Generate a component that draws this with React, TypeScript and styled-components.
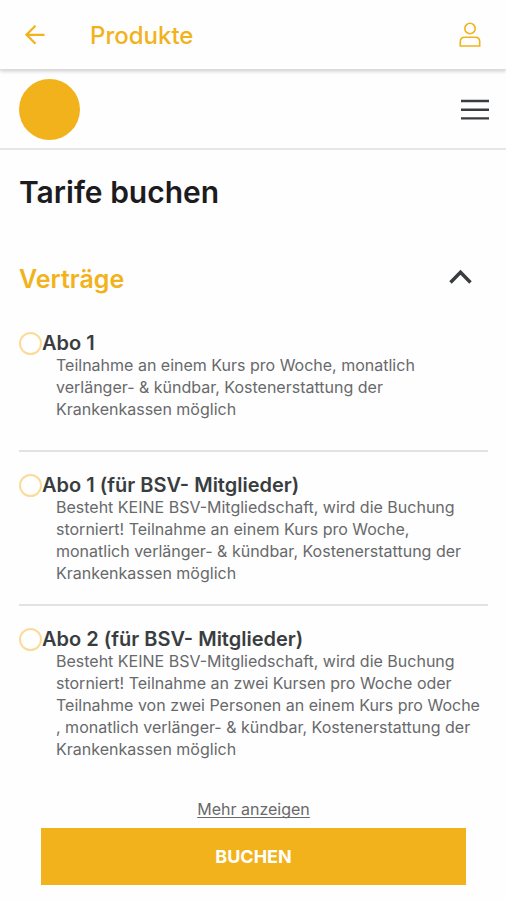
import React, { useState } from "react";
import styled, { createGlobalStyle } from "styled-components";

const accent = "#f2b21b";

const GlobalStyle = createGlobalStyle`
  *, *::before, *::after { box-sizing: border-box; }
  body {
    margin: 0;
    background: #fefefe;
    color: #3a3d40;
    font-family: Inter, "Liberation Sans", sans-serif;
  }
  button { font: inherit; color: inherit; border: 0; padding: 0; background: none; cursor: pointer; }
`;

const Page = styled.div`
  display: flex;
  flex-direction: column;
  min-height: 100vh;
`;

const AppBar = styled.header`
  display: flex;
  align-items: center;
  gap: 40px;
  height: 70px;
  padding: 3px 20px 0;
  color: ${accent};
  border-bottom: 1px solid #dcdcdc;
  box-shadow: 0 1px 4px rgba(0, 0, 0, 0.22);
`;

const AppTitle = styled.span`
  flex: 1;
  font-size: 24px;
  font-weight: 500;
  line-height: 32px;
`;

const IconButton = styled.button`
  display: flex;
  align-items: center;
  justify-content: center;
  flex: none;
`;

const SiteBar = styled.nav`
  display: flex;
  align-items: center;
  justify-content: space-between;
  height: 80px;
  padding: 0 16px 0 19px;
  border-bottom: 2px solid #e6e6e6;
`;

const Logo = styled.a`
  width: 61px;
  height: 61px;
  border-radius: 50%;
  background: ${accent};
`;

const Main = styled.main`
  display: flex;
  flex-direction: column;
  flex: 1;
  padding: 24px 18px 15px 19px;
`;

const Heading = styled.h1`
  margin: 0;
  font-size: 30px;
  font-weight: 600;
  line-height: 36px;
  color: #1c1c1e;
`;

const SectionHeader = styled.div`
  display: flex;
  align-items: center;
  justify-content: space-between;
  margin-top: 52px;
  padding-right: 16px;
`;

const SectionTitle = styled.h2`
  margin: 0;
  font-size: 25px;
  font-weight: 600;
  line-height: 34px;
  color: ${accent};
`;

const Tariffs = styled.div`
  display: flex;
  flex-direction: column;
  margin-top: 14px;
`;

const Tariff = styled.label`
  display: grid;
  grid-template-columns: 23px 1fr;
  grid-template-rows: 22px;
  align-content: start;
  min-height: 140px;
  padding: 22px 0 20px;
  cursor: pointer;

  & + & { border-top: 2px solid #e2e2e2; }
`;

const Radio = styled.input`
  appearance: none;
  align-self: center;
  width: 23px;
  height: 23px;
  margin: 0;
  border: 2px solid #fadb9a;
  border-radius: 50%;
  background: #ffffff;

  &:checked { background: ${accent}; box-shadow: inset 0 0 0 4px #ffffff; }
`;

const TariffName = styled.span`
  font-size: 20px;
  font-weight: 600;
  line-height: 22px;
`;

const Description = styled.span`
  grid-column: 1 / -1;
  padding: 0 4px 0 37px;
  font-size: 16px;
  line-height: 22px;
  color: #68696b;
`;

const Actions = styled.div`
  display: flex;
  flex-direction: column;
  align-items: center;
  gap: 8px;
  margin-top: auto;
  padding: 0 22px;
`;

const MoreButton = styled.button`
  font-size: 16px;
  line-height: 22px;
  color: #68696b;
  text-decoration: underline;
  text-underline-offset: 2px;
  text-decoration-skip-ink: none;
`;

const BookButton = styled.button`
  width: 100%;
  height: 57px;
  background: ${accent};
  color: #ffffff;
  font-size: 18px;
  font-weight: 700;
`;

const tariffs = [
  {
    id: "abo-1",
    name: "Abo 1",
    text: "Teilnahme an einem Kurs pro Woche, monatlich verlänger- & kündbar, Kostenerstattung der Krankenkassen möglich",
  },
  {
    id: "abo-1-bsv",
    name: "Abo 1 (für BSV- Mitglieder)",
    text: "Besteht KEINE BSV-Mitgliedschaft, wird die Buchung storniert! Teilnahme an einem Kurs pro Woche, monatlich verlänger- & kündbar, Kostenerstattung der Krankenkassen möglich",
  },
  {
    id: "abo-2-bsv",
    name: "Abo 2 (für BSV- Mitglieder)",
    text: "Besteht KEINE BSV-Mitgliedschaft, wird die Buchung storniert! Teilnahme an zwei Kursen pro Woche oder Teilnahme von zwei Personen an einem Kurs pro Woche , monatlich verlänger- & kündbar, Kostenerstattung der Krankenkassen möglich",
  },
];

export default function App() {
  const [selected, setSelected] = useState("");
  const [open, setOpen] = useState(true);

  return (
    <Page>
      <GlobalStyle />
      <AppBar>
        <IconButton aria-label="Zurück">
          <svg width="30" height="30" viewBox="0 0 30 30" fill="none" stroke="currentColor" strokeWidth="2.200">
            <path d="M24.500 13.800H7M15.500 4.800L6.500 13.800L15.500 22.800" />
          </svg>
        </IconButton>
        <AppTitle>Produkte</AppTitle>
        <IconButton aria-label="Profil">
          <svg width="32" height="32" viewBox="0 0 32 32" fill="none" stroke="currentColor" strokeWidth="1.600">
            <circle cx="16" cy="8.500" r="5.200" />
            <path d="M6.300 26V21.800Q6.300 17.300 10.800 17.300H21.200Q25.700 17.300 25.700 21.800V26Z" />
          </svg>
        </IconButton>
      </AppBar>
      <SiteBar>
        <Logo href="#" aria-label="Startseite" />
        <IconButton aria-label="Menü">
          <svg width="30" height="24" viewBox="0 0 30 24" fill="none" stroke="#3a3d40" strokeWidth="2.400">
            <path d="M1 4H29M1 12.700H29M1 21.400H29" />
          </svg>
        </IconButton>
      </SiteBar>
      <Main>
        <Heading>Tarife buchen</Heading>
        <SectionHeader>
          <SectionTitle>Verträge</SectionTitle>
          <IconButton aria-label="Verträge ein- oder ausklappen" aria-expanded={open} onClick={() => setOpen(!open)}>
            <svg width="24" height="24" viewBox="0 0 24 24" fill="none" stroke="#3a3d40" strokeWidth="3.400">
              <path d="M2.500 15.500L12.500 5.200L22.500 15.500" />
            </svg>
          </IconButton>
        </SectionHeader>
        {open && (
          <Tariffs role="radiogroup" aria-label="Verträge">
            {tariffs.map((t) => (
              <Tariff key={t.id}>
                <Radio type="radio" name="tarif" checked={selected === t.id} onChange={() => setSelected(t.id)} />
                <TariffName>{t.name}</TariffName>
                <Description>{t.text}</Description>
              </Tariff>
            ))}
          </Tariffs>
        )}
        <Actions>
          <MoreButton>Mehr anzeigen</MoreButton>
          <BookButton>BUCHEN</BookButton>
        </Actions>
      </Main>
    </Page>
  );
}
